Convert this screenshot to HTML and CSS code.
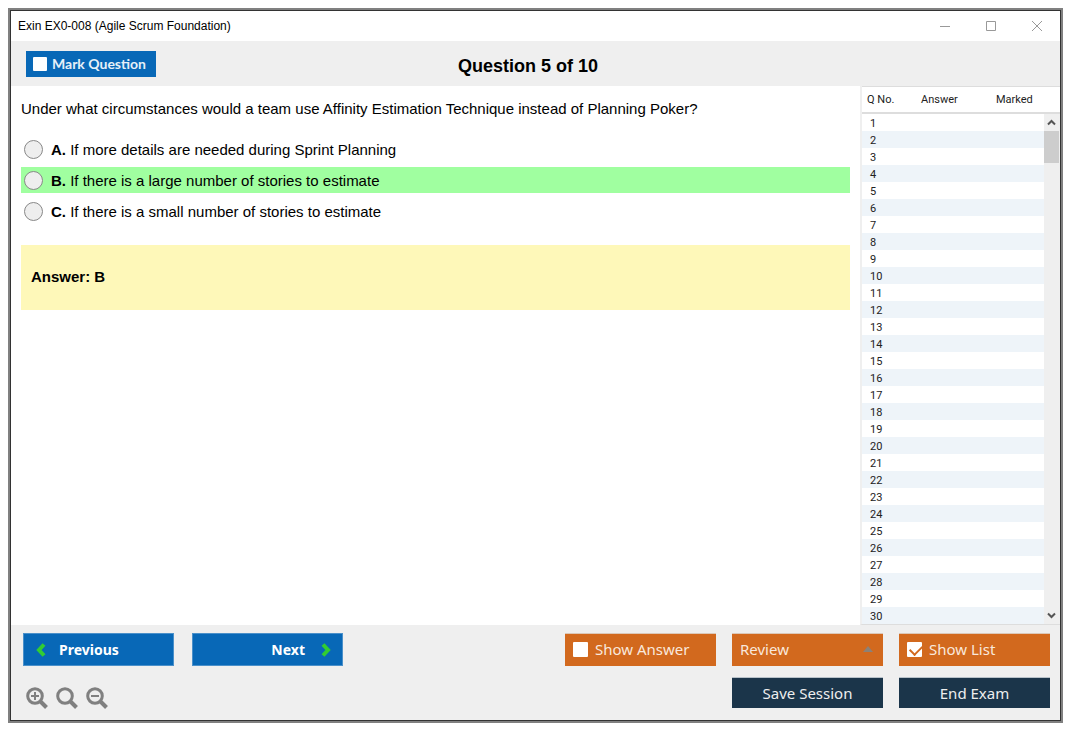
FILE: index.html
```
<!DOCTYPE html>
<html lang="en">
<head>
    <meta charset="UTF-8">
    <meta name="viewport" content="width=device-width, initial-scale=1.0">
    <title>Exin EX0-008 (Agile Scrum Foundation)</title>
    <link rel="stylesheet" href="styles.css">
</head>
<body>

    <div class="window">
        <div class="title-bar">
            <span class="title">Exin EX0-008 (Agile Scrum Foundation)</span>
            <div class="window-buttons">
                <button type="button" aria-label="Minimize">
                    <svg width="12" height="12" viewBox="0 0 12 12"><path d="M1 6.500h10"/></svg>
                </button>
                <button type="button" aria-label="Maximize">
                    <svg width="12" height="12" viewBox="0 0 12 12"><path d="M1.500 1.500h9v9h-9z"/></svg>
                </button>
                <button type="button" aria-label="Close">
                    <svg width="12" height="12" viewBox="0 0 12 12"><path d="M1 1l10 10M11 1L1 11"/></svg>
                </button>
            </div>
        </div>

        <header class="header">
            <label class="mark"><input type="checkbox" class="check"> Mark Question</label>
            <h1>Question 5 of 10</h1>
        </header>

        <div class="main">
            <div class="question">
                <p class="question-text">Under what circumstances would a team use Affinity Estimation Technique instead of Planning Poker?</p>
                <div class="options">
                    <label class="option"><input type="radio" name="answer" value="A"><span><b>A.</b> If more details are needed during Sprint Planning</span></label>
                    <label class="option correct"><input type="radio" name="answer" value="B"><span><b>B.</b> If there is a large number of stories to estimate</span></label>
                    <label class="option"><input type="radio" name="answer" value="C"><span><b>C.</b> If there is a small number of stories to estimate</span></label>
                </div>
                <div class="answer-box">Answer: B</div>
            </div>

            <div class="list">
                <table>
                    <thead>
                        <tr><th class="col-no">Q No.</th><th class="col-answer">Answer</th><th>Marked</th></tr>
                    </thead>
                    <tbody id="rows"></tbody>
                </table>
                <div class="scroll">
                    <div class="scroll-head"></div>
                    <button type="button" aria-label="Scroll up">
                        <svg width="9" height="7" viewBox="0 0 9 7"><path d="M1 5.500l3.500-3.500L8 5.500"/></svg>
                    </button>
                    <div class="thumb"></div>
                    <button type="button" class="down" aria-label="Scroll down">
                        <svg width="9" height="7" viewBox="0 0 9 7"><path d="M1 1.500l3.500 3.500L8 1.500"/></svg>
                    </button>
                </div>
            </div>
        </div>

        <footer class="footer">
            <div class="footer-row">
                <div class="group nav">
                    <button type="button" class="btn blue prev">
                        <svg width="10" height="14" viewBox="0 0 10 14"><path d="M8 1.500L3 7l5 5.500"/></svg>
                        Previous
                    </button>
                    <button type="button" class="btn blue next">
                        Next
                        <svg width="10" height="14" viewBox="0 0 10 14"><path d="M2 1.500L7 7l-5 5.500"/></svg>
                    </button>
                </div>
                <div class="group">
                    <label class="btn orange"><input type="checkbox" class="check"> Show Answer</label>
                    <div class="review">
                        <select class="btn orange" aria-label="Review">
                            <option>Review</option>
                        </select>
                        <svg width="10" height="6" viewBox="0 0 10 6"><path d="M0 6l5-6 5 6z"/></svg>
                    </div>
                    <label class="btn orange"><input type="checkbox" class="check" checked> Show List</label>
                </div>
            </div>
            <div class="footer-row">
                <div class="group zoom">
                    <button type="button" aria-label="Zoom in">
                        <svg width="22" height="22" viewBox="0 0 22 22"><circle cx="9" cy="9" r="7.300"/><path class="handle" d="M14.500 14.500l6 6"/><path class="sign" d="M5 9h8M9 5v8"/></svg>
                    </button>
                    <button type="button" aria-label="Reset zoom">
                        <svg width="22" height="22" viewBox="0 0 22 22"><circle cx="9" cy="9" r="7.300"/><path class="handle" d="M14.500 14.500l6 6"/></svg>
                    </button>
                    <button type="button" aria-label="Zoom out">
                        <svg width="22" height="22" viewBox="0 0 22 22"><circle cx="9" cy="9" r="7.300"/><path class="handle" d="M14.500 14.500l6 6"/><path class="sign" d="M5 9h8"/></svg>
                    </button>
                </div>
                <div class="group">
                    <button type="button" class="btn dark">Save Session</button>
                    <button type="button" class="btn dark">End Exam</button>
                </div>
            </div>
        </footer>
    </div>

    <script>
        const rows = document.getElementById("rows");
        for (let i = 1; i <= 30; i++) {
            const tr = document.createElement("tr");
            tr.innerHTML = `<td>${i}</td><td></td><td></td>`;
            rows.appendChild(tr);
        }
    </script>

</body>
</html>
```
FILE: styles.css
```
* {
    box-sizing: border-box;
}
body {
    margin: 0;
    padding: 8px 12px 12px 8px;
    min-height: 100vh;
    display: flex;
    background-color: #fff;
    color: #000;
    font-family: "Liberation Sans", Arial, sans-serif;
    font-size: 15px;
}
button, select {
    font-family: inherit;
    border: none;
    padding: 0;
    background: none;
    cursor: pointer;
}
svg {
    display: block;
    fill: none;
}
.window {
    flex: 1;
    display: flex;
    flex-direction: column;
    min-width: 0;
    border: 2px solid #808080;
    outline: 1px solid #333;
    outline-offset: -3px;
    padding: 1px;
}

/* Title bar */
.title-bar {
    display: flex;
    justify-content: space-between;
    align-items: center;
    height: 30px;
    padding: 0 17px 0 7px;
}
.title {
    font-size: 12px;
}
.window-buttons {
    display: flex;
    gap: 34px;
}
.window-buttons svg {
    stroke: #999;
}

/* Header */
.header {
    display: grid;
    grid-template-columns: 1fr auto 1fr;
    align-items: center;
    height: 45px;
    padding: 0 30px 0 15px;
    background-color: #efefef;
}
.header h1 {
    margin: 0;
    padding-top: 6px;
    font-size: 18px;
}
.mark {
    display: flex;
    align-items: center;
    gap: 5px;
    width: 130px;
    height: 26px;
    padding-left: 7px;
    background-color: #0868b7;
    color: #e6f0f8;
    font: bold 14px Lato, sans-serif;
    cursor: pointer;
}
.check {
    appearance: none;
    flex: none;
    width: 14px;
    height: 14px;
    margin: 0;
    border-radius: 1px;
    background-color: #fff;
}

/* Question */
.main {
    flex: 1;
    display: flex;
}
.question {
    flex: 1;
    padding: 13px 10px 10px;
}
.question-text {
    margin: 0 0 17px;
    line-height: 20px;
}
.options {
    display: flex;
    flex-direction: column;
    gap: 5px;
}
.option {
    display: flex;
    align-items: center;
    gap: 8px;
    height: 26px;
    padding-left: 3px;
}
.option input {
    appearance: none;
    width: 19px;
    height: 19px;
    margin: 0;
    border: 1px solid #888;
    border-radius: 50%;
    background-color: #eee;
}
.option input:checked {
    background-color: #0868b7;
}
.correct {
    background-color: #a0ffa0;
}
.answer-box {
    margin-top: 21px;
    padding: 22px 10px 23px;
    background-color: #fef8b9;
    font-weight: bold;
    line-height: 20px;
}

/* Question list */
.list {
    display: flex;
    width: 200px;
    border-left: 2px solid #efefef;
    border-bottom: 1px solid #ddd;
}
table {
    flex: 1;
    align-self: flex-start;
    border-collapse: separate;
    border-spacing: 0;
    table-layout: fixed;
    font-family: Roboto, sans-serif;
    font-size: 11px;
    color: #222;
}
th {
    height: 28px;
    padding: 0 0 0 5px;
    border-top: 1px solid #ddd;
    border-bottom: 2px solid #ddd;
    font-weight: normal;
    text-align: left;
}
.col-no {
    width: 54px;
}
.col-answer {
    width: 75px;
}
td {
    height: 17px;
    padding: 2px 8px 0;
    line-height: 15px;
}
tbody tr:nth-child(even) {
    background-color: #eef4f9;
}
.scroll {
    display: flex;
    flex-direction: column;
    width: 16px;
    background-color: #efefef;
}
.scroll-head {
    height: 28px;
    background-color: #fff;
    border-top: 1px solid #ddd;
    border-bottom: 2px solid #ddd;
}
.scroll button {
    display: flex;
    align-items: center;
    justify-content: center;
    width: 15px;
    height: 17px;
}
.scroll svg {
    stroke: #555;
    stroke-width: 2;
}
.thumb {
    width: 15px;
    height: 32px;
    background-color: #cdcdcd;
}
.scroll .down {
    margin-top: auto;
}

/* Footer */
.footer {
    display: flex;
    flex-direction: column;
    gap: 11px;
    padding: 8px 10px 11px 12px;
    background-color: #efefef;
}
.footer-row {
    display: flex;
    justify-content: space-between;
    align-items: flex-start;
}
.group {
    display: flex;
    gap: 16px;
}
.nav {
    gap: 18px;
}
.btn {
    display: flex;
    align-items: center;
    width: 151px;
    height: 33px;
    font-family: "Noto Sans", sans-serif;
    font-size: 15px;
}
.blue {
    border: 1px solid #4a90ca;
    background-color: #0868b7;
    color: #fff;
    font-size: 14px;
    font-weight: bold;
}
.blue svg {
    stroke: #32cd32;
    stroke-width: 4;
}
.prev {
    gap: 13px;
    padding-left: 12px;
}
.next {
    justify-content: flex-end;
    gap: 16px;
    padding-right: 11px;
}
.orange {
    gap: 7px;
    padding: 0 0 2px 8px;
    border-top: 1px solid #dcc8b8;
    background-color: #d2691e;
    color: #f9e8dc;
    cursor: pointer;
}
.orange .check {
    width: 15px;
    height: 15px;
}
.orange .check:checked::after {
    content: "";
    display: block;
    width: 10px;
    height: 6px;
    margin: 3px;
    border-left: 2px solid #d2691e;
    border-bottom: 2px solid #d2691e;
    transform: rotate(-45deg);
}
.review {
    position: relative;
}
.review select {
    appearance: none;
}
.review svg {
    position: absolute;
    right: 10px;
    top: 13px;
    fill: #8c8177;
    pointer-events: none;
}
.dark {
    justify-content: center;
    height: 31px;
    border-top: 1px solid #b8c2ca;
    background-color: #1b354a;
    color: #eee;
}
.zoom {
    gap: 8px;
    padding: 10px 0 0 3px;
}
.zoom svg {
    stroke: #808080;
    stroke-width: 3;
}
.zoom .handle {
    stroke-width: 4;
}
.zoom .sign {
    stroke-width: 2;
}
```
